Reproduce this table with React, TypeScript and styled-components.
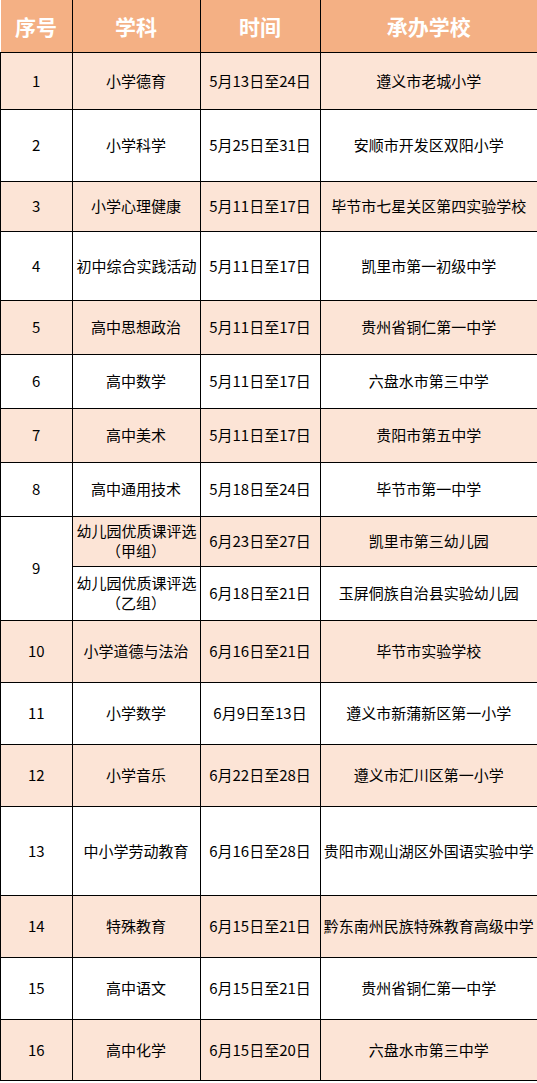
import React from "react";
import styled, { createGlobalStyle } from "styled-components";

type Tone = "peach" | "white";

interface Entry {
  no?: string;
  span?: number;
  subject: string[];
  time: string;
  school: string;
  tone: Tone;
  noTone?: Tone;
  height: number;
}

const entries: Entry[] = [
  { no: "1", subject: ["小学德育"], time: "5月13日至24日", school: "遵义市老城小学", tone: "peach", height: 57 },
  { no: "2", subject: ["小学科学"], time: "5月25日至31日", school: "安顺市开发区双阳小学", tone: "white", height: 72 },
  { no: "3", subject: ["小学心理健康"], time: "5月11日至17日", school: "毕节市七星关区第四实验学校", tone: "peach", height: 50 },
  { no: "4", subject: ["初中综合实践活动"], time: "5月11日至17日", school: "凯里市第一初级中学", tone: "white", height: 69 },
  { no: "5", subject: ["高中思想政治"], time: "5月11日至17日", school: "贵州省铜仁第一中学", tone: "peach", height: 54 },
  { no: "6", subject: ["高中数学"], time: "5月11日至17日", school: "六盘水市第三中学", tone: "white", height: 54 },
  { no: "7", subject: ["高中美术"], time: "5月11日至17日", school: "贵阳市第五中学", tone: "peach", height: 54 },
  { no: "8", subject: ["高中通用技术"], time: "5月18日至24日", school: "毕节市第一中学", tone: "white", height: 54 },
  { no: "9", span: 2, noTone: "white", subject: ["幼儿园优质课评选", "（甲组）"], time: "6月23日至27日", school: "凯里市第三幼儿园", tone: "peach", height: 50 },
  { subject: ["幼儿园优质课评选", "（乙组）"], time: "6月18日至21日", school: "玉屏侗族自治县实验幼儿园", tone: "white", height: 54 },
  { no: "10", subject: ["小学道德与法治"], time: "6月16日至21日", school: "毕节市实验学校", tone: "peach", height: 62 },
  { no: "11", subject: ["小学数学"], time: "6月9日至13日", school: "遵义市新蒲新区第一小学", tone: "white", height: 62 },
  { no: "12", subject: ["小学音乐"], time: "6月22日至28日", school: "遵义市汇川区第一小学", tone: "peach", height: 62 },
  { no: "13", subject: ["中小学劳动教育"], time: "6月16日至28日", school: "贵阳市观山湖区外国语实验中学", tone: "white", height: 89 },
  { no: "14", subject: ["特殊教育"], time: "6月15日至21日", school: "黔东南州民族特殊教育高级中学", tone: "peach", height: 62 },
  { no: "15", subject: ["高中语文"], time: "6月15日至21日", school: "贵州省铜仁第一中学", tone: "white", height: 62 },
  { no: "16", subject: ["高中化学"], time: "6月15日至20日", school: "六盘水市第三中学", tone: "peach", height: 61 },
];

const GlobalStyle = createGlobalStyle`
  html, body {
    margin: 0;
    padding: 0;
    background: #ffffff;
  }
`;

const Table = styled.table`
  width: 537px;
  border-collapse: collapse;
  table-layout: fixed;
  font-family: "Noto Sans CJK SC", "Noto Sans", sans-serif;
  color: #000;
`;

const HeadRow = styled.tr`
  height: 52px;
  background: #f4b084;
`;

const HeadCell = styled.th<{ $w?: number }>`
  ${(p) => (p.$w ? `width: ${p.$w}px;` : "")}
  padding: 0;
  font-size: 21px;
  font-weight: 700;
  color: #ffffff;
  text-align: center;
  vertical-align: middle;
  border-right: 1px solid #000;
  border-bottom: 1px solid #000;

  &:last-child {
    border-right: 0;
  }
`;

const Row = styled.tr<{ $h: number }>`
  height: ${(p) => p.$h}px;
`;

const Cell = styled.td<{ $tone: Tone }>`
  padding: 0 4px;
  font-size: 15px;
  line-height: 20px;
  text-align: center;
  vertical-align: middle;
  white-space: nowrap;
  background: ${(p) => (p.$tone === "peach" ? "#fce4d6" : "#ffffff")};
  border: 1px solid #000;
  border-top: 0;

  &:last-child {
    border-right: 0;
    padding: 0;
  }
`;

const Line = styled.div`
  display: block;
`;

export default function App() {
  return (
    <>
      <GlobalStyle />
      <Table>
        <thead>
          <HeadRow>
            <HeadCell $w={71}>序号</HeadCell>
            <HeadCell $w={127}>学科</HeadCell>
            <HeadCell $w={119}>时间</HeadCell>
            <HeadCell>承办学校</HeadCell>
          </HeadRow>
        </thead>
        <tbody>
          {entries.map((e, i) => (
            <Row key={i} $h={e.height}>
              {e.no && (
                <Cell $tone={e.noTone ?? e.tone} rowSpan={e.span}>
                  {e.no}
                </Cell>
              )}
              <Cell $tone={e.tone}>
                {e.subject.map((s) => (
                  <Line key={s}>{s}</Line>
                ))}
              </Cell>
              <Cell $tone={e.tone}>{e.time}</Cell>
              <Cell $tone={e.tone}>{e.school}</Cell>
            </Row>
          ))}
        </tbody>
      </Table>
    </>
  );
}
